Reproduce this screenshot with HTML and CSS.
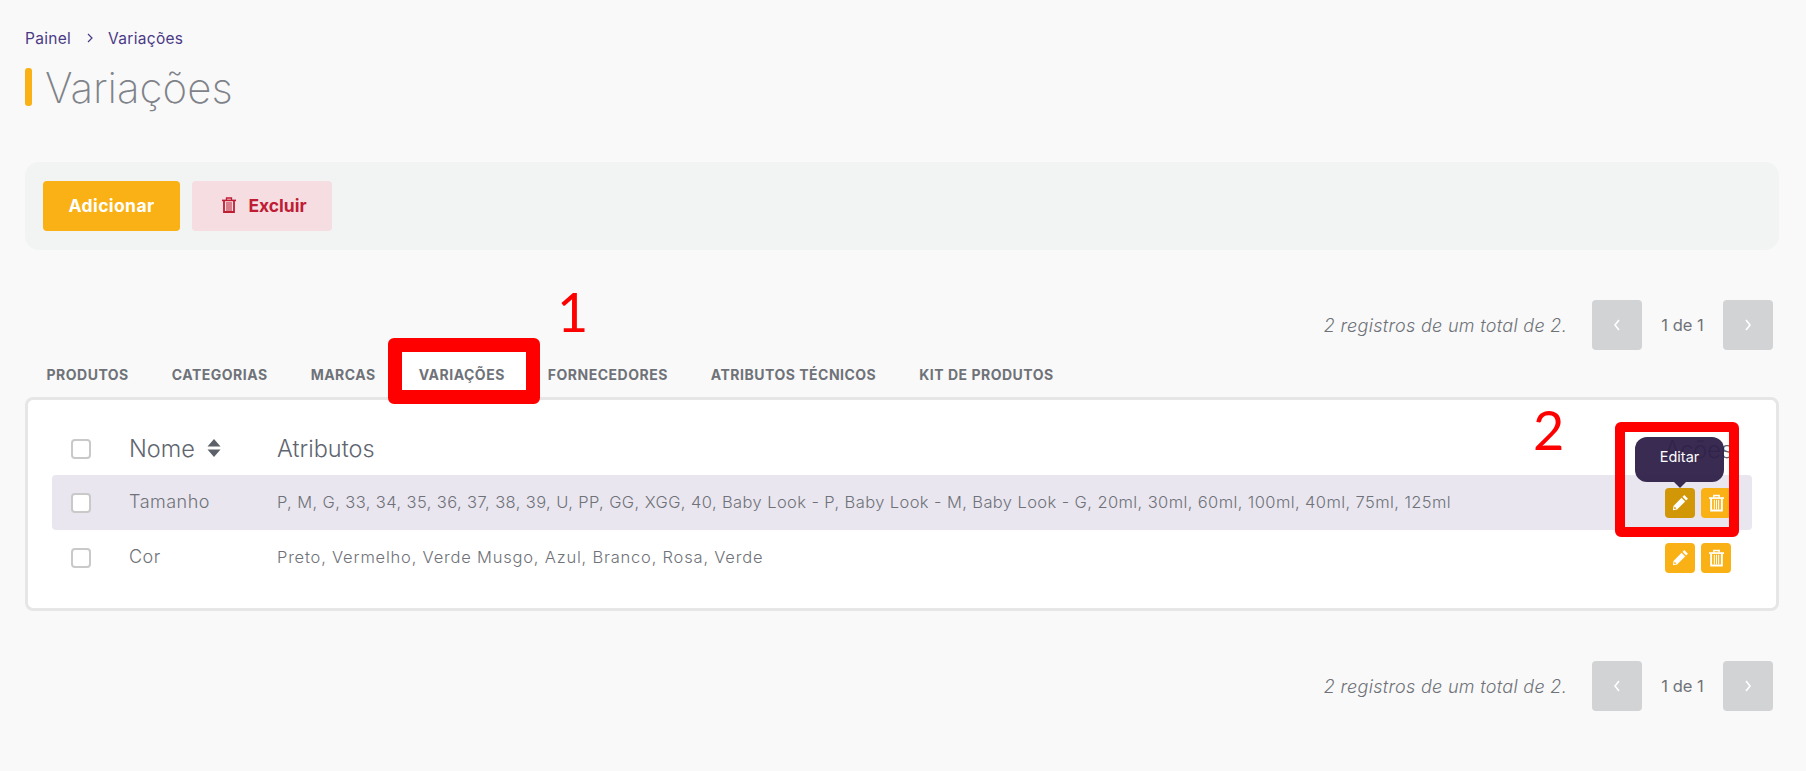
FILE: index.html
```html
<!DOCTYPE html>
<html>
  <head>
    <title>Variações</title>
    <link rel="stylesheet" href="styles.css">
  </head>
  <body>
    <div class="page">
      <div class="breadcrumb">
        <span>Painel</span>
        <svg class="crumb-sep" width="8" height="10" viewBox="0 0 8 10"><path d="M2 1l4 4-4 4" fill="none" stroke="#4b3a86" stroke-width="1.2"/></svg>
        <span>Variações</span>
      </div>
      <div class="title-row">
        <span class="title-mark"></span>
        <h1>Variações</h1>
      </div>

      <div class="toolbar">
        <button class="btn btn-add">Adicionar</button>
        <button class="btn btn-del">
          <svg width="14" height="16" viewBox="0 0 14 16" fill="none" stroke="#bf1d34"><path d="M4.5 3V1h5v2" stroke-width="1.3"/><path d="M0 3.4h14" stroke-width="1.6"/><path d="M2 4v11h10V4" stroke-width="1.8"/><path d="M5 5v9M7 5v9M9 5v9" stroke-width="1"/></svg>
          Excluir
        </button>
      </div>

      <div class="pager pager-top">
        <span class="pager-info">2 registros de um total de 2.</span>
        <span class="pager-btn"><svg width="10" height="14" viewBox="0 0 10 14"><path d="M7 2L3 7l4 5" fill="none" stroke="#fff" stroke-width="1.6"/></svg></span>
        <span class="pager-count">1 de 1</span>
        <span class="pager-btn"><svg width="10" height="14" viewBox="0 0 10 14"><path d="M3 2l4 5-4 5" fill="none" stroke="#fff" stroke-width="1.6"/></svg></span>
      </div>

      <div class="tabs">
        <span class="tab">PRODUTOS</span>
        <span class="tab">CATEGORIAS</span>
        <span class="tab">MARCAS</span>
        <span class="tab tab-active">VARIAÇÕES</span>
        <span class="tab">FORNECEDORES</span>
        <span class="tab">ATRIBUTOS TÉCNICOS</span>
        <span class="tab">KIT DE PRODUTOS</span>
      </div>

      <div class="panel">
        <div class="row row-head">
          <span class="col-check"><span class="check"></span></span>
          <span class="col-name">Nome
            <svg class="sort" width="14" height="18" viewBox="0 0 14 18"><path d="M7 0l6.5 7.6H.5zM7 18L.5 10.4h13z" fill="#5c6068"/></svg>
          </span>
          <span class="col-attrs">Atributos</span>
          <span class="col-actions">Ações</span>
        </div>
        <div class="row row-hover">
          <span class="col-check"><span class="check"></span></span>
          <span class="col-name">Tamanho</span>
          <span class="col-attrs">P, M, G, 33, 34, 35, 36, 37, 38, 39, U, PP, GG, XGG, 40, Baby Look - P, Baby Look - M, Baby Look - G, 20ml, 30ml, 60ml, 100ml, 40ml, 75ml, 125ml</span>
          <span class="col-actions">
            <span class="icon-btn icon-btn-on">
              <span class="tooltip">Editar</span>
              <svg width="17" height="17" viewBox="0 0 16 16"><path d="M11.6 1l3.4 3.4-1.7 1.7-3.4-3.4zM9 3.6L12.4 7l-7.6 7.6-3.9.7L1.4 11.2zM2.4 11.8l-.4 2.2 2.2-.4z" fill="#fff" fill-rule="evenodd"/></svg>
            </span>
            <span class="icon-btn">
              <svg width="15" height="18" viewBox="0 0 14 16" fill="none" stroke="#fff"><path d="M4.5 3V1h5v2" stroke-width="1.3"/><path d="M0 3.4h14" stroke-width="1.6"/><path d="M2 4v11h10V4" stroke-width="1.8"/><path d="M5 5v9M7 5v9M9 5v9" stroke-width="1"/></svg>
            </span>
          </span>
        </div>
        <div class="row">
          <span class="col-check"><span class="check"></span></span>
          <span class="col-name">Cor</span>
          <span class="col-attrs attrs-short">Preto, Vermelho, Verde Musgo, Azul, Branco, Rosa, Verde</span>
          <span class="col-actions">
            <span class="icon-btn">
              <svg width="17" height="17" viewBox="0 0 16 16"><path d="M11.6 1l3.4 3.4-1.7 1.7-3.4-3.4zM9 3.6L12.4 7l-7.6 7.6-3.9.7L1.4 11.2zM2.4 11.8l-.4 2.2 2.2-.4z" fill="#fff" fill-rule="evenodd"/></svg>
            </span>
            <span class="icon-btn">
              <svg width="15" height="18" viewBox="0 0 14 16" fill="none" stroke="#fff"><path d="M4.5 3V1h5v2" stroke-width="1.3"/><path d="M0 3.4h14" stroke-width="1.6"/><path d="M2 4v11h10V4" stroke-width="1.8"/><path d="M5 5v9M7 5v9M9 5v9" stroke-width="1"/></svg>
            </span>
          </span>
        </div>
      </div>

      <div class="pager pager-bottom">
        <span class="pager-info">2 registros de um total de 2.</span>
        <span class="pager-btn"><svg width="10" height="14" viewBox="0 0 10 14"><path d="M7 2L3 7l4 5" fill="none" stroke="#fff" stroke-width="1.6"/></svg></span>
        <span class="pager-count">1 de 1</span>
        <span class="pager-btn"><svg width="10" height="14" viewBox="0 0 10 14"><path d="M3 2l4 5-4 5" fill="none" stroke="#fff" stroke-width="1.6"/></svg></span>
      </div>

      <!-- annotations drawn over the screenshot -->
      <div class="mark mark-tab"></div>
      <div class="mark mark-action"></div>
      <span class="mark-num mark-num-1">1</span>
      <span class="mark-num mark-num-2">2</span>
    </div>
  </body>
</html>
```

FILE: styles.css
```css
* {
  box-sizing: border-box;
}
html,
body {
  margin: 0;
  background-color: #f9f9f9;
}
body {
  font-family: "Inter", "Open Sans", sans-serif;
  color: #6f7278;
}
.page {
  position: relative;
  width: 1806px;
  height: 771px;
  padding: 27px 27px 0 25px;
  overflow: hidden;
}
.breadcrumb {
  display: flex;
  align-items: center;
  height: 22px;
  font-size: 15.5px;
  letter-spacing: 0.3px;
  color: #4b3a86;
}
.crumb-sep {
  margin: 0 14.5px;
}
.title-row {
  display: flex;
  align-items: center;
  height: 38px;
  margin-top: 19px;
}
.title-mark {
  width: 7px;
  height: 38px;
  border-radius: 3px;
  background-color: #f9b115;
}
h1 {
  margin: 0 0 0 13px;
  font-size: 42px;
  font-weight: 200;
  color: #7f8389;
}
.toolbar {
  display: flex;
  gap: 12px;
  height: 88px;
  margin-top: 56px;
  padding: 19px 18px;
  border-radius: 14px;
  background-color: #f2f4f4;
}
.btn {
  display: flex;
  align-items: center;
  justify-content: center;
  height: 50px;
  padding: 0 0 2px;
  border: 0;
  border-radius: 4px;
  font-family: inherit;
  font-size: 17.5px;
  font-weight: 700;
}
.btn-add {
  width: 137px;
  letter-spacing: 0.4px;
  background-color: #f9b115;
  color: #fff;
}
.btn-del {
  width: 140px;
  gap: 12px;
  padding-left: 5px;
  background-color: #f6dde2;
  color: #bf1d34;
}
.pager {
  display: flex;
  align-items: center;
  justify-content: flex-end;
  height: 50px;
  padding-right: 6px;
}
.pager-top {
  margin-top: 50px;
}
.pager-bottom {
  margin-top: 50px;
}
.pager-info {
  margin-right: 25px;
  font-size: 18px;
  letter-spacing: 0.3px;
  font-style: italic;
  font-weight: 300;
}
.pager-btn {
  display: flex;
  align-items: center;
  justify-content: center;
  width: 50px;
  height: 50px;
  border-radius: 4px;
  background-color: #d1d3d5;
}
.pager-count {
  width: 81px;
  text-align: center;
  font-size: 16.5px;
}
.tabs {
  display: flex;
  height: 47px;
}
.tab {
  padding: 16px 21.5px 0;
  font-size: 14px;
  letter-spacing: 0.5px;
  font-weight: 700;
  line-height: 17px;
  color: #6f7278;
}
.tab-active {
  background-color: #fff;
}
.panel {
  height: 214px;
  padding: 23px 24px;
  border: 3px solid #e6e6e6;
  border-radius: 8px;
  background-color: #fff;
}
.row {
  display: flex;
  align-items: center;
  height: 55px;
  padding-left: 19px;
  border-radius: 4px;
  font-size: 16.5px;
  letter-spacing: 0.4px;
  font-weight: 300;
}
.row-head {
  height: 52px;
  font-size: 23.5px;
  letter-spacing: 0;
  color: #5f6670;
}
.row-hover {
  background-color: #e9e6f0;
}
.col-check {
  display: flex;
  width: 58px;
}
.col-name {
  display: flex;
  align-items: center;
  gap: 12px;
  width: 148px;
  padding-bottom: 2px;
}
.row:not(.row-head) .col-name {
  font-size: 18px;
  letter-spacing: 0.5px;
}
.col-attrs {
  flex: 1;
  padding-bottom: 2px;
}
.attrs-short {
  letter-spacing: 0.8px;
}
.col-actions {
  display: flex;
  justify-content: flex-end;
  gap: 6px;
  padding-right: 21px;
}
.row-head .col-actions {
  padding-right: 19px;
}
.check {
  width: 20px;
  height: 20px;
  border: 2px solid #c9c9c9;
  border-radius: 4px;
  background-color: #fff;
}
.icon-btn {
  position: relative;
  display: flex;
  align-items: center;
  justify-content: center;
  width: 30px;
  height: 30px;
  border-radius: 4px;
  background-color: #f9b115;
}
.icon-btn-on {
  background-color: #d19707;
}
.tooltip {
  position: absolute;
  left: -30px;
  bottom: 36px;
  width: 89px;
  height: 45px;
  padding-top: 11px;
  border-radius: 12px;
  background-color: #2f2049;
  opacity: 0.95;
  color: #fff;
  font-size: 14.5px;
  letter-spacing: 0;
  font-weight: 400;
  text-align: center;
}
.tooltip::after {
  content: "";
  position: absolute;
  left: 39px;
  bottom: -6px;
  border-top: 6px solid #2f2049;
  border-left: 6px solid transparent;
  border-right: 6px solid transparent;
}
.mark {
  position: absolute;
  border-style: solid;
  border-color: #ff0000;
  border-radius: 6px;
}
.mark-tab {
  left: 388px;
  top: 338px;
  width: 152px;
  height: 66px;
  border-width: 14px;
}
.mark-action {
  left: 1615px;
  top: 422px;
  width: 124px;
  height: 115px;
  border-width: 10px;
}
.mark-num {
  position: absolute;
  font-family: "Lato", sans-serif;
  font-size: 54px;
  line-height: 52px;
  color: #ff0000;
}
.mark-num-1 {
  left: 557px;
  top: 286px;
}
.mark-num-2 {
  left: 1533px;
  top: 404px;
}
```
